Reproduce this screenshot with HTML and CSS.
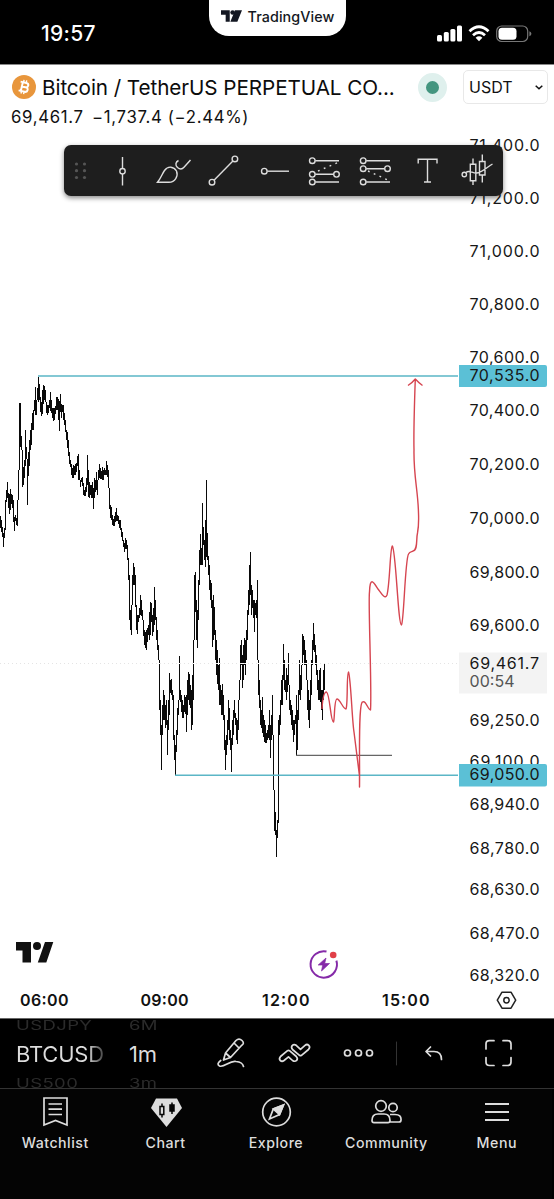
FILE: index.html
```html
<!DOCTYPE html>
<html lang="en">
<head>
<meta charset="utf-8">
<title>TradingView</title>
<link rel="stylesheet" href="styles.css">
</head>
<body>
<div class="app">
  <header class="status">
    <div class="clock">19:57</div>
    <div class="brand">
      <svg width="21" height="12" viewBox="0 0 36 20" fill="#131722"><path d="M0 0h15v20H8V8H0zM24 20h-8L24 0h12l-8 20z" /><circle cx="20" cy="4" r="4"/></svg>
      <span>TradingView</span>
    </div>
    <svg class="signals" width="96" height="18" viewBox="0 0 96 18" fill="#fff">
      <rect x="0" y="10" width="5" height="6.5" rx="1.5"/><rect x="6.8" y="7" width="5" height="9.5" rx="1.5"/><rect x="13.4" y="4" width="5" height="12.500" rx="1.5"/><rect x="20" y="0.500" width="5" height="16" rx="1.5"/>
      <g fill="none" stroke="#fff" stroke-width="2.800"><path d="M32.500 6.200Q42 -2.800 51.500 6.200M36 10.300Q42 4.800 48 10.300"/></g><path d="M38.600 12.700Q42 10 45.400 12.700L42 16.200z"/>
      <rect x="59.700" y="1" width="31" height="15.500" rx="5" fill="none" stroke="#777" stroke-width="1.200"/><rect x="61.500" y="2.800" width="18" height="12" rx="3.500"/><path d="M92.400 6.300q2 .7 2 2.500t-2 2.500z" fill="#777"/>
    </svg>
  </header>
  <section class="symbol">
    <div class="symbol-row">
      <svg class="coin" width="24" height="24" viewBox="0 0 24 24"><circle cx="12" cy="12" r="12" fill="#e8963c"/><g transform="rotate(13 12 12)" fill="none" stroke="#fff" stroke-width="2"><path d="M7.500 7.500h5.800q2.500 0 2.500 2.200T13.300 12H9.500M7.500 16.500h6.200q2.500 0 2.500-2.300T13.700 12M9.800 7.500v9"/><path d="M10.500 5v2.500M13.200 5v2.500M10.500 16.500V19M13.200 16.500V19" stroke-width="1.400"/></g></svg>
      <h1 class="name">Bitcoin / TetherUS PERPETUAL CO...</h1>
      <i class="live"></i>
      <div class="currency"><span>USDT</span><svg width="8" height="5" viewBox="0 0 8 5" fill="none" stroke="#111" stroke-width="1.500"><path d="M.7.7 4 3.800 7.300.7"/></svg></div>
    </div>
    <div class="quote"><span>69,461.7</span><span>−1,737.4 (−2.44%)</span></div>
  </section>
  <main class="chart">
    <svg width="554" height="888" viewBox="0 130 554 888">
      <g class="scale" id="scale"></g>
      <path id="bars" class="bars"/>
      <path d="M0 663.500H458" stroke="#fff" stroke-width="1"/>
      <path d="M0 663.500H458" stroke="#e4e4e4" stroke-width="1" stroke-dasharray="1 3"/>
      <path d="M38 376H458M175 775.300H458" stroke="#5bb6c6" stroke-width="1.400"/>
      <path d="M296 755.300H392" stroke="#666" stroke-width="1.300"/>
      <path class="forecast" d="M322 709C322.500 700 324 692 326.500 692C330 694 330.500 722 333.500 722C334.800 720 334 699 337 699C340 699 343 709 346 709C348 705 346.500 672 348.500 672C351 680 352 720 354 732L359.500 776V787C360 770 358 704 362.500 702C366 700 368 710 370.500 710C372 690 368 600 369.500 592C370 575 374 583 378 589C381 593 385 600 387 595C390 583 390 548 392.300 546C396 550 398 625 401.500 625C404 621 405 560 408.500 554C410 551 412 552 413 551C418 550 416 539 417.500 533Q419 525 418.500 513C418 490 413.500 476 414 450Q413.500 430 415.300 379M408 385.500 Q412 383 415.300 379Q419 383 422.500 385.500"/>
      <g class="tags"><path d="M459 365h86q2 0 2 2v18q0 2-2 2h-86zM459 764h86q2 0 2 2v18.500q0 2-2 2h-86z" fill="#5bc0d6"/><path d="M459 652.500h88v41h-88z" fill="#f3f3f3"/>
        <text x="469.500" y="381.200" textLength="70">70,535.0</text><text x="469.500" y="780.400" textLength="70">69,050.0</text><text x="469.500" y="668.500" textLength="69.500">69,461.7</text><text x="469.500" y="687" textLength="45" fill="#555">00:54</text></g>
      <g class="times"><text x="20" y="1006" textLength="48.500">06:00</text><text x="140.500" y="1006" textLength="48">09:00</text><text x="262" y="1006" textLength="47.500">12:00</text><text x="382" y="1006" textLength="47.500">15:00</text></g>
      <path d="M16 942h15v20.500h-8.500v-12H16zM48 962.500h-9.500l6.500-20.500H53z" fill="none"/>
      <path d="M16 942h15v20.500h-8.500v-12H16zM37.800 962.500 45 942H53.300L46.300 962.500z" fill="#111"/><circle cx="37" cy="946" r="4" fill="#111"/>
      <path d="M326.500 951.500A13.200 13.200 0 1 0 336.400 960.600" fill="none" stroke="#852aa8" stroke-width="2"/><circle cx="333.200" cy="955" r="3.300" fill="#e14048"/><path d="M326 958 318.200 965h4.500l-1.200 6 8-7.500h-4.800z" fill="#852aa8" stroke="#852aa8" stroke-width=".7" stroke-linejoin="round"/>
      <g fill="none" stroke="#222" stroke-width="1.500"><path d="M502 992.200h9l4.700 8-4.700 8h-9l-4.700-8z" stroke-linejoin="round"/><circle cx="506.500" cy="1000.200" r="2.700"/></g>
    </svg>
    <div class="draw-tools">
      <svg width="439" height="51" viewBox="64 145 439 51" fill="none" stroke="#ddd" stroke-width="1.400">
        <g fill="#555" stroke="none"><circle cx="76.500" cy="164" r="1.600"/><circle cx="84.500" cy="164" r="1.600"/><circle cx="76.500" cy="170.700" r="1.600"/><circle cx="84.500" cy="170.700" r="1.600"/><circle cx="76.500" cy="177.500" r="1.600"/><circle cx="84.500" cy="177.500" r="1.600"/></g>
        <path d="M122.500 157v11.500M122.500 174v11.500"/><circle cx="122.500" cy="171.200" r="2.700"/>
        <path d="M157.500 182.300C161 178 162 174 164.500 170.500C168 165.500 174 166.500 176.500 171C178.500 176 175 182.300 169 182.300zM178.500 160.500C175.500 162 175 165 177.500 167.500C180 169.500 182 169.500 184 167.200L190.500 160"/>
        <path d="M214 180.200 232.900 160.900"/><circle cx="212" cy="182.200" r="2.800"/><circle cx="234.900" cy="158.900" r="2.800"/>
        <path d="M267.300 171.200H289"/><circle cx="264.300" cy="171.200" r="2.800"/>
        <g><path d="M315.300 160.700H339M315.300 174.300H333.500M315.300 182H339"/><path d="M318 171 339 162" stroke-dasharray="1.800 4.500"/><circle cx="312.300" cy="160.700" r="2.800"/><circle cx="312.300" cy="174.300" r="2.800"/><circle cx="312.300" cy="182" r="2.800"/><circle cx="336.500" cy="174.300" r="2.800"/></g>
        <g><path d="M366.200 160.700H390M366.200 168.700H384.500M366.200 182H390"/><path d="M368 171 389 180.500" stroke-dasharray="1.800 4.500"/><circle cx="363.200" cy="160.700" r="2.800"/><circle cx="363.200" cy="168.700" r="2.800"/><circle cx="363.200" cy="182" r="2.800"/><circle cx="387.500" cy="168.700" r="2.800"/></g>
        <path d="M418.200 163.500v-4.200H437v4.200M427.500 159.300V182M424 182h7"/>
        <circle cx="464.300" cy="174.500" r="2.200"/><path d="M466 172.600C469 169 473 174 477 173C483 172 487 167 492.500 164M470.300 164.200h5.500v16.500h-5.500zM479.500 161.500H485V175h-5.500zM473 158.500v5.500M473 181v4M482.300 154.500v7M482.300 175.500v7"/>
      </svg>
    </div>
  </main>
  <section class="controls">
    <div class="wheel wheel-symbol"><span class="ghost">USDJPY</span><span class="current fade">BTCUSD</span><span class="ghost">US500</span></div>
    <div class="wheel wheel-time"><span class="ghost">6M</span><span class="current">1m</span><span class="ghost">3m</span></div>
    <svg class="actions" width="354" height="70" viewBox="200 1019 354 70" fill="none" stroke="#ddd" stroke-width="1.700" stroke-linecap="round" stroke-linejoin="round">
      <path d="M223.500 1060 225.500 1053 236 1040.500Q239 1037.500 242 1040.500T241.500 1045.500L230.500 1057.500zM225.500 1053 230.500 1057.500M234 1043 239 1048"/><path d="M220.700 1060.500Q216 1064 219.500 1066C224 1068 230 1060 236 1061.500Q242.500 1062 243.500 1066.500"/>
      <path d="M280.500 1056.500 287.500 1050.700Q288.500 1050 289.500 1050.700L296.300 1056.500Q298.300 1059 296.500 1060.500Q295 1062 292.500 1060.500L288.500 1056.800 284 1060.500Q282 1062 280.300 1060.500T280.500 1056.500zM292.500 1049.500Q290.800 1047.500 292.200 1045.500Q294 1043.700 296.200 1045.300L300.500 1049.300 305 1045.300Q307 1043.700 308.800 1045.300T308.500 1049.500L301.500 1055.300Q300.500 1056 299.500 1055.300z"/>
      <circle cx="347.500" cy="1053" r="3"/><circle cx="358.500" cy="1053" r="3"/><circle cx="369.500" cy="1053" r="3"/>
      <path d="M396.500 1042V1065" stroke="#333" stroke-width="1"/>
      <path d="M430.500 1047 426 1051.500 430.500 1056M426.500 1051.500H434Q441.500 1051.500 441.500 1059.500"/>
      <path d="M486 1049V1044Q486 1040.700 489.500 1040.700H494M503 1040.700H507.500Q511 1040.700 511 1044V1049M511 1057.500V1062Q511 1065.500 507.500 1065.500H503M494 1065.500H489.500Q486 1065.500 486 1062V1057.500"/>
    </svg>
  </section>
  <nav class="tabs">
    <a class="tab"><svg width="32" height="32" viewBox="0 0 32 32" fill="none" stroke="#ddd" stroke-width="1.700"><path d="M5 2h23v27L16.500 24.500 5 29zM9.500 8h13.500M9.500 13.200h13.500M9.500 18.500h13.500"/></svg><span>Watchlist</span></a>
    <a class="tab"><svg width="32" height="32" viewBox="0 0 32 32"><path d="M6 2.500H27L32 12 16.500 31 1 12z" fill="#ddd"/><g fill="none" stroke="#050505" stroke-width="1.500"><path d="M10 10.500h3.800v8H10zM12 7.500v3M12 18.500v3"/><path d="M20 9h4v6h-4zM22 6.500V18" fill="#050505"/></g></svg><span>Chart</span></a>
    <a class="tab"><svg width="32" height="32" viewBox="0 0 32 32" fill="none" stroke="#ddd" stroke-width="1.700"><circle cx="16.500" cy="16" r="13.800"/><path d="M23.500 9 19.500 18.500 9.500 23 13.300 13z"/><path d="M23.500 9 19.500 18.500 13.300 13z" fill="#ddd"/></svg><span>Explore</span></a>
    <a class="tab"><svg width="32" height="32" viewBox="0 0 32 32" fill="none" stroke="#ddd" stroke-width="1.700"><circle cx="11" cy="10" r="5.300"/><circle cx="23" cy="11.500" r="4.200"/><path d="M2 24.500Q2 18 8 18h6Q20 18 20 24.500Q20 26.700 18 26.700H4Q2 26.700 2 24.500zM20 18.500H25Q31.500 18.500 31 24Q31 26 29 26H20"/></svg><span>Community</span></a>
    <a class="tab"><svg width="32" height="32" viewBox="0 0 32 32" fill="none" stroke="#ddd" stroke-width="1.800"><path d="M4 8h24M4 16h24M4 24h24"/></svg><span>Menu</span></a>
  </nav>
</div>
<script src="chart.js"></script>
</body>
</html>
```
FILE: styles.css
```css
* { box-sizing: border-box; }
body { margin: 0; background: #000; font-family: Inter, "Liberation Sans", sans-serif; color: #111; }
svg { display: block; flex: none; }
.app { width: 554px; height: 1199px; display: flex; flex-direction: column; overflow: hidden; }
.status { height: 65px; flex: none; display: grid; grid-template-columns: 209px 137px 208px; background: #000; border-bottom: 1px solid #888; }
.clock { color: #fff; font-size: 21px; font-weight: 500; line-height: 24px; padding: 22px 0 0 41px; letter-spacing: .3px; }
.brand { height: 36px; background: #fff; border-radius: 0 0 20px 20px; display: flex; align-items: center; justify-content: center; gap: 6px; padding-bottom: 4px; font-size: 14.3px; font-weight: 500; color: #131722; letter-spacing: .1px; }
.signals { margin: 25px 0 0 91px; }
.symbol { height: 65px; flex: none; background: #fff; }
.symbol-row { height: 43px; display: flex; align-items: center; padding: 1px 6px 0 12px; }
.name { margin: 0 0 0 6px; width: 360px; font-size: 20.7px; font-weight: 400; letter-spacing: -.08px; white-space: nowrap; color: #0c0c0c; }
.live { width: 29px; height: 29px; margin-left: 16px; border-radius: 50%; border: 8px solid #dff0ed; background: #43957f; flex: none; }
.currency { width: 85px; height: 34px; margin-left: auto; border: 1.5px solid #e8e8e8; border-radius: 5px; display: flex; align-items: center; justify-content: space-between; padding: 0 4px 0 5px; font-size: 16px; }
.quote { display: flex; gap: 8.5px; padding-left: 11px; font-size: 16.800px; line-height: 18px; letter-spacing: .65px; }
.chart { position: relative; height: 888px; flex: none; background: #fff; }
.scale, .tags { font-size: 16px; fill: #171717; }
.times { font-size: 16px; font-weight: 600; fill: #111; }
.bars { fill: none; stroke: #0a0a0a; stroke-width: 1; }
.forecast { fill: none; stroke: #d64550; stroke-width: 1.4; stroke-linejoin: round; }
.draw-tools { position: absolute; left: 64px; top: 15px; background: #1e1e1e; border-radius: 7px; box-shadow: 0 2px 5px #0007; }
.controls { height: 71px; flex: none; display: flex; background: #000; border-top: 1px solid #666; border-bottom: 1px solid #333; overflow: hidden; }
.wheel { display: flex; flex-direction: column; justify-content: center; gap: 4px; height: 70px; white-space: nowrap; }
.wheel-symbol { width: 113px; padding-left: 16px; }
.wheel-time { width: 87px; padding-left: 16px; }
.ghost { font-size: 18.5px; line-height: 24px; color: #2b2b2b; transform: scaleY(.72); letter-spacing: .4px; }
.current { font-size: 22px; line-height: 26px; color: #ddd; letter-spacing: -.2px; }
.fade { width: 91px; background: linear-gradient(90deg, #ddd 78%, #222 100%); background-clip: text; -webkit-background-clip: text; color: transparent; }
.tabs { width: 552px; height: 110px; flex: none; background: #040404; display: grid; grid-template-columns: repeat(5, 1fr); padding-top: 7px; }
.tab { display: flex; flex-direction: column; align-items: center; gap: 5px; color: #ddd; font-size: 14.200px; line-height: 20px; font-weight: 500; letter-spacing: .5px; }
```
FILE: chart.js
```js
// High and low of every bar, one bar per pixel column.
const bars = `516-528 520-532 527-537 533-547 528-538 500-530 490-502 482-498 493-508 494-514
489-510 494-504 495-508 500-522 517-531 515-521 518-525 500-526 470-500 403-470
403-447 436-450 450-487 467-485 460-478 430-466 447-459 459-505 452-476 440-466
430-450 423-445 413-430 410-430 400-411 387-415 400-415 388-400 377-402 384-400
397-412 402-416 390-414 385-404 386-400 390-402 402-413 405-415 405-413 400-408
392-411 400-413 408-418 408-421 408-420 406-414 397-410 397-410 399-420 401-431
394-412 404-418 405-412 405-420 413-425 420-432 430-440 432-448 440-456 452-464
460-467 464-475 468-478 465-478 466-475 464-475 463-472 456-466 454-480 470-480
480-487 478-482 477-486 483-495 490-496 487-496 478-492 455-485 470-497 482-498
485-495 485-498 482-498 488-509 478-498 480-492 472-490 480-495 470-480 464-478
468-479 471-479 467-480 470-480 468-475 470-475 461-475 465-477 470-488 488-509
505-518 507-520 515-525 519-526 516-526 512-522 508-521 515-521 516-524 520-528
520-530 528-537 532-541 540-547 543-552 538-549 540-549 545-560 558-580 575-620
610-630 605-635 575-605 563-585 567-585 575-607 605-630 615-634 615-622 608-618
595-615 600-616 610-620 620-636 630-645 632-648 630-650 628-642 625-635 612-640
602-635 603-622 615-636 608-632 587-625 600-620 617-640 630-650 645-660 660-710
700-735 725-770 705-735 690-720 695-720 705-728 700-725 720-755 700-730 673-715
680-693 679-695 690-700 695-740 735-760 745-775 730-752 708-735 700-715 656-700
690-702 695-712 700-718 705-718 695-712 697-714 695-732 680-715 672-700 674-705
685-708 690-730 675-725 640-700 575-640 572-612 600-640 610-648 580-620 550-585
534-565 548-565 503-565 527-545 540-560 520-567 480-557 533-560 556-575 565-590
580-600 583-608 600-647 595-640 607-635 630-660 640-675 650-684 665-690 658-705
685-705 690-715 684-715 695-720 715-750 740-770 735-755 720-745 700-730 708-740
730-750 738-772 720-745 710-735 700-718 713-725 718-740 720-744 700-730 680-700
645-680 640-665 655-688 645-680 638-665 640-675 630-660 610-640 590-615 565-605
552-595 585-615 590-608 600-618 600-632 603-615 600-618 580-660 660-695 680-708
700-725 710-728 697-733 715-737 720-742 725-743 733-743 730-740 725-738 710-740
725-758 715-740 695-735 735-790 790-831 812-835 830-857 820-838 720-823 715-735
700-725 680-705 675-705 644-680 660-690 680-692 668-700 675-692 653-685 685-710
700-715 705-725 710-730 720-742 720-735 715-724 695-755 710-750 690-720 660-695
675-700 665-690 634-660 636-655 640-665 650-665 660-680 690-710 690-720 700-728
680-710 660-695 640-665 623-650 634-652 645-665 655-675 670-690 680-700 670-700
668-702 690-710 690-720 670-700 663-690`.split(/\s+/).map(b => b.split("-").map(Number));

let d = "";
let prev = bars[0];
bars.forEach(([hi, lo], x) => {
  const top = Math.min(hi, prev[1]);
  const bottom = Math.max(lo, prev[0]);
  d += `M${x + 0.5} ${top}V${bottom}`;
  prev = [hi, lo];
});
document.getElementById("bars").setAttribute("d", d);

const labels = [["71,400.0", 151.2], ["71,200.0", 204.2], ["71,000.0", 257], ["70,800.0", 310], ["70,600.0", 363.2],
  ["70,400.0", 416.2], ["70,200.0", 470], ["70,000.0", 524], ["69,800.0", 577.5], ["69,600.0", 631], ["69,250.0", 726],
  ["69,100.0", 767], ["68,940.0", 810.3], ["68,780.0", 854], ["68,630.0", 895.2], ["68,470.0", 938.5], ["68,320.0", 980.5]];
const scale = document.getElementById("scale");
for (const [text, y] of labels) {
  const t = document.createElementNS("http://www.w3.org/2000/svg", "text");
  t.setAttribute("x", 469.5);
  t.setAttribute("y", y);
  t.setAttribute("textLength", 70);
  t.textContent = text;
  scale.append(t);
}
```
